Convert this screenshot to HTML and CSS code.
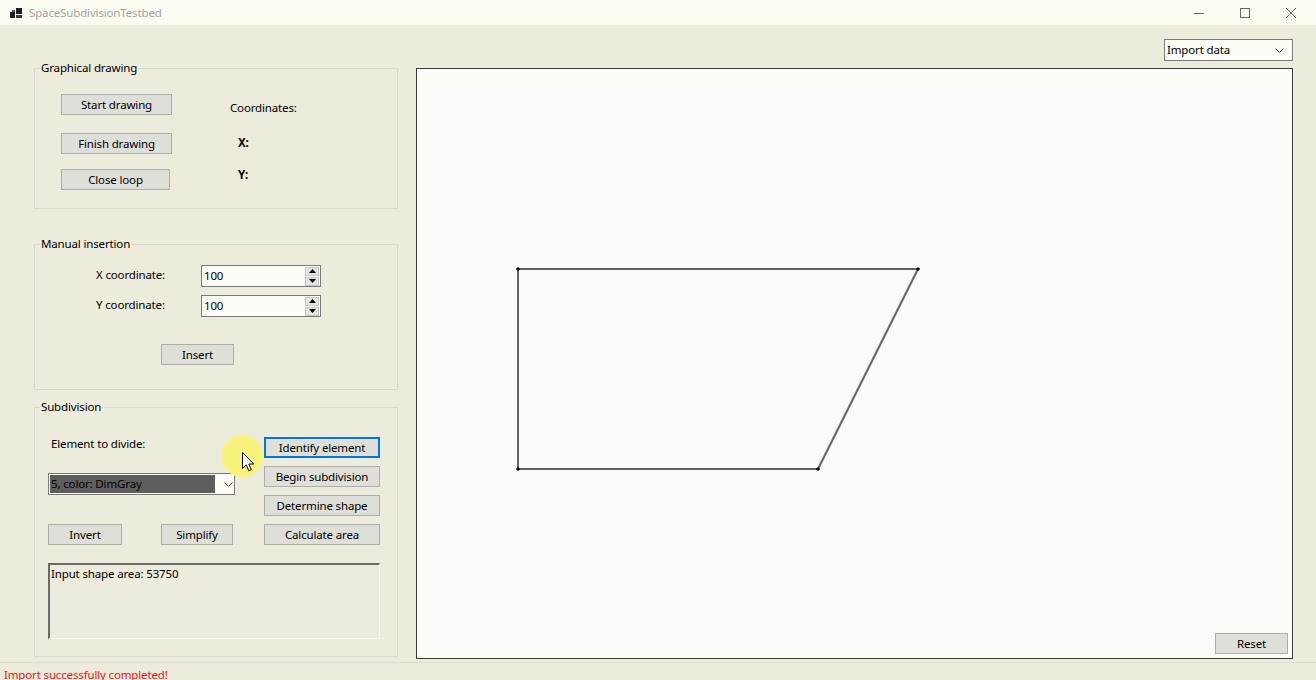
FILE: index.html
```html
<!DOCTYPE html>
<html lang="en">
<head>
<meta charset="utf-8">
<title>SpaceSubdivisionTestbed</title>
<link rel="stylesheet" href="styles.css">
</head>
<body>
<div class="window">
  <div class="titlebar">
    <svg class="app-icon" width="12" height="11" viewBox="0 0 12 11">
      <rect x="6" y="0" width="6" height="6" fill="#1e1e1e"/>
      <rect x="0" y="4" width="5" height="6" fill="#1e1e1e"/>
      <rect x="6" y="7" width="6" height="3" fill="#3a3a3a"/>
      <rect x="2" y="2" width="3" height="2" fill="#555"/>
    </svg>
    <span class="title">SpaceSubdivisionTestbed</span>
    <div class="controls">
      <span class="ctl"><svg width="12" height="12" viewBox="0 0 12 12"><path d="M1 6.5h10" stroke="#6a6a6a" stroke-width="1"/></svg></span>
      <span class="ctl"><svg width="12" height="12" viewBox="0 0 12 12"><rect x="1.5" y="1.5" width="9" height="9" fill="none" stroke="#6a6a6a" stroke-width="1"/></svg></span>
      <span class="ctl"><svg width="12" height="12" viewBox="0 0 12 12"><path d="M1 1l10 10M11 1L1 11" stroke="#6a6a6a" stroke-width="1"/></svg></span>
    </div>
  </div>

  <div class="main">
    <div class="left">
      <fieldset class="group">
        <legend>Graphical drawing</legend>
        <div class="body g1">
          <div class="g1-buttons">
            <button class="btn b-start">Start drawing</button>
            <button class="btn b-finish">Finish drawing</button>
            <button class="btn b-close">Close loop</button>
          </div>
          <div class="g1-labels">
            <span class="lbl coord">Coordinates:</span>
            <span class="lbl strong lx">X:</span>
            <span class="lbl strong ly">Y:</span>
          </div>
        </div>
      </fieldset>

      <fieldset class="group g2-set">
        <legend>Manual insertion</legend>
        <div class="body g2">
          <div class="num-row">
            <span class="num-label">X coordinate:</span>
            <div class="numeric">
              <span class="num-value">100</span>
              <div class="spin">
                <span class="spin-btn"><svg width="7" height="4" viewBox="0 0 7 4"><path d="M3.5 0L7 4H0z" fill="#000"/></svg></span>
                <span class="spin-btn"><svg width="7" height="4" viewBox="0 0 7 4"><path d="M0 0h7L3.5 4z" fill="#000"/></svg></span>
              </div>
            </div>
          </div>
          <div class="num-row second">
            <span class="num-label">Y coordinate:</span>
            <div class="numeric">
              <span class="num-value">100</span>
              <div class="spin">
                <span class="spin-btn"><svg width="7" height="4" viewBox="0 0 7 4"><path d="M3.5 0L7 4H0z" fill="#000"/></svg></span>
                <span class="spin-btn"><svg width="7" height="4" viewBox="0 0 7 4"><path d="M0 0h7L3.5 4z" fill="#000"/></svg></span>
              </div>
            </div>
          </div>
          <button class="btn b-insert">Insert</button>
        </div>
      </fieldset>

      <fieldset class="group g3-set">
        <legend>Subdivision</legend>
        <div class="body g3">
          <div class="sub-grid">
            <span class="lbl elem-label">Element to divide:</span>
            <button class="btn focused">Identify element</button>
            <div class="combo elem-combo">
              <span class="sel">5, color: DimGray</span>
              <svg class="chev" width="9" height="5" viewBox="0 0 9 5"><path d="M0.5 0.5L4.5 4.5L8.5 0.5" fill="none" stroke="#333" stroke-width="1"/></svg>
            </div>
            <button class="btn">Begin subdivision</button>
            <button class="btn">Determine shape</button>
            <div class="pair">
              <button class="btn b-invert">Invert</button>
              <button class="btn b-simplify">Simplify</button>
            </div>
            <button class="btn">Calculate area</button>
          </div>
          <div class="output">Input shape area: 53750</div>
        </div>
      </fieldset>
    </div>

    <div class="right">
      <div class="combo import">
        <span class="import-text">Import data</span>
        <svg class="chev" width="9" height="5" viewBox="0 0 9 5"><path d="M0.5 0.5L4.5 4.5L8.5 0.5" fill="none" stroke="#333" stroke-width="1"/></svg>
      </div>
      <div class="canvas">
        <svg class="drawing" width="875" height="589" viewBox="0 0 875 589">
          <polygon points="101,200 501,200 401,400 101,400" fill="none" stroke="#636363" stroke-width="2"/>
          <g fill="#000">
            <rect x="99.5" y="198.5" width="3" height="3" transform="rotate(45 101 200)"/>
            <rect x="499.5" y="198.5" width="3" height="3" transform="rotate(45 501 200)"/>
            <rect x="399.5" y="398.5" width="3" height="3" transform="rotate(45 401 400)"/>
            <rect x="99.5" y="398.5" width="3" height="3" transform="rotate(45 101 400)"/>
          </g>
        </svg>
        <button class="btn b-reset">Reset</button>
      </div>
    </div>
  </div>

  <div class="status">Import successfully completed!</div>

  <div class="halo"></div>
  <svg class="cursor" width="13" height="20" viewBox="0 0 13 20">
    <path d="M0.5 0.5V16.5L4.3 12.9L6.8 18.8L9.3 17.7L6.8 12H11.8Z" fill="#fff" stroke="#000" stroke-width="1" stroke-linejoin="round"/>
  </svg>
</div>
</body>
</html>
```

FILE: styles.css
```css
* { box-sizing: border-box; }

html, body {
  margin: 0;
  padding: 0;
}

body {
  width: 1316px;
  height: 680px;
  overflow: hidden;
  font-family: "Noto Sans", "Open Sans", "DejaVu Sans", sans-serif;
  font-size: 11.5px;
  letter-spacing: -0.15px;
  color: #000;
  background: #ecebdc;
}

.window {
  position: relative;
  width: 1316px;
  height: 680px;
  display: flex;
  flex-direction: column;
}

/* Title bar */
.titlebar {
  height: 25px;
  flex: none;
  background: #fbfbf2;
  display: flex;
  align-items: center;
}

.app-icon {
  margin-left: 10px;
  margin-top: 1px;
}

.title {
  margin-left: 7px;
  color: #a3a3a3;
  line-height: 16px;
}

.controls {
  margin-left: auto;
  display: flex;
  height: 25px;
  align-items: center;
}

.ctl {
  width: 46px;
  height: 25px;
  display: flex;
  align-items: center;
  justify-content: center;
}

.ctl:last-child { margin-right: 2px; }

/* Main area */
.main {
  height: 637px;
  flex: none;
  display: flex;
}

.left {
  width: 364px;
  margin-left: 34px;
  padding-top: 36px;
  display: flex;
  flex-direction: column;
}

.group {
  margin: 0;
  padding: 0;
  border: 1px solid #d9d9d3;
  min-width: 0;
}

.group legend {
  margin-left: 5px;
  padding: 0 1px;
  height: 14px;
  line-height: 14px;
}

.g2-set { margin-top: 28px; }
.g3-set { margin-top: 10px; }

.body { position: relative; }

/* Group 1 */
.g1 {
  height: 133px;
  padding: 19px 0 0 26px;
  display: flex;
}

.g1-buttons {
  display: flex;
  flex-direction: column;
  align-items: flex-start;
}

.btn {
  font-family: inherit;
  font-size: 11.5px;
  letter-spacing: -0.15px;
  line-height: 14px;
  color: #000;
  height: 21px;
  padding: 0;
  margin: 0;
  background: #dfdfda;
  border: 1px solid #adadad;
  border-radius: 0;
}

.b-start, .b-finish { width: 111px; }
.b-finish { margin-top: 18px; }
.b-close { width: 109px; margin-top: 15px; }

.g1-labels {
  display: flex;
  flex-direction: column;
  align-items: flex-start;
  margin-left: 58px;
}

.lbl {
  line-height: 16px;
  height: 16px;
  white-space: nowrap;
}

.strong { font-weight: bold; }

.coord { margin-top: 6px; }
.lx { margin-top: 19px; margin-left: 8px; }
.ly { margin-top: 16px; margin-left: 8px; }

/* Group 2 */
.g2 {
  height: 138px;
  padding: 14px 0 0 61px;
  display: flex;
  flex-direction: column;
  align-items: flex-start;
}

.num-row {
  display: flex;
  align-items: center;
  height: 22px;
}

.num-row.second { margin-top: 8px; }

.num-label {
  width: 105px;
  line-height: 16px;
  margin-top: -3px;
}

.numeric {
  width: 120px;
  height: 22px;
  background: #fdfdf8;
  border: 1px solid #7a7a7a;
  display: flex;
  align-items: center;
}

.num-value {
  flex: 1;
  padding-left: 2px;
  line-height: 16px;
}

.spin {
  width: 14px;
  height: 19px;
  margin-right: 1px;
  display: flex;
  flex-direction: column;
  gap: 1px;
}

.spin-btn {
  flex: 1;
  background: #e4e4e0;
  border: 1px solid #c6c6c6;
  display: flex;
  align-items: center;
  justify-content: center;
}

.b-insert {
  width: 73px;
  margin-top: 27px;
  margin-left: 65px;
}

/* Group 3 */
.g3 {
  height: 242px;
  padding: 23px 0 0 13px;
}

.sub-grid {
  display: grid;
  grid-template-columns: 187px 116px;
  grid-template-rows: repeat(4, 21px);
  column-gap: 29px;
  row-gap: 8px;
}

.elem-label {
  grid-column: 1;
  grid-row: 1;
  margin-left: 3px;
  margin-top: -1px;
}

.focused {
  border: 2px solid #0078d7;
}

.combo {
  background: #fdfdf8;
  border: 1px solid #7a7a7a;
  display: flex;
  align-items: center;
}

.elem-combo {
  grid-column: 1;
  grid-row: 2 / span 2;
  align-self: start;
  margin-top: 7px;
  height: 22px;
  padding: 1px;
}

.sel {
  width: 166px;
  height: 18px;
  background: #5e5e5e;
  line-height: 18px;
  color: #000;
  padding-left: 1px;
  white-space: nowrap;
}

.elem-combo .chev { margin-left: 9px; }

.pair {
  grid-column: 1;
  grid-row: 4;
  display: flex;
  gap: 39px;
}

.b-invert { width: 74px; }
.b-simplify { width: 72px; }

.output {
  margin-top: 18px;
  width: 332px;
  height: 76px;
  border-top: 2px solid #6a6a6a;
  border-left: 2px solid #6a6a6a;
  border-right: 1px solid #f7f7f2;
  border-bottom: 1px solid #f7f7f2;
  padding: 1px 0 0 1px;
  line-height: 16px;
  background: #ecebdd;
}

/* Right side */
.right {
  margin-left: 18px;
  width: 877px;
  padding-top: 14px;
  display: flex;
  flex-direction: column;
  align-items: flex-end;
}

.import {
  width: 129px;
  height: 22px;
  padding: 0 8px 0 2px;
}

.import-text {
  flex: 1;
  line-height: 16px;
}

.canvas {
  margin-top: 7px;
  width: 877px;
  height: 591px;
  background: #fbfbf7;
  border: 1px solid #3c3c3c;
  display: grid;
}

.drawing {
  grid-area: 1 / 1;
  display: block;
}

.b-reset {
  grid-area: 1 / 1;
  align-self: end;
  justify-self: end;
  width: 73px;
  margin: 0 4px 4px 0;
}

/* Status bar */
.status {
  border-top: 1px solid #dcdcd6;
  flex: 1;
  padding: 4px 0 0 4px;
  color: #e01616;
  line-height: 16px;
}

/* Cursor highlight overlay */
.halo {
  position: absolute;
  left: 221px;
  top: 435px;
  width: 42px;
  height: 42px;
  border-radius: 50%;
  background: #f9f37d;
}

.cursor {
  position: absolute;
  left: 242px;
  top: 452px;
}
```
